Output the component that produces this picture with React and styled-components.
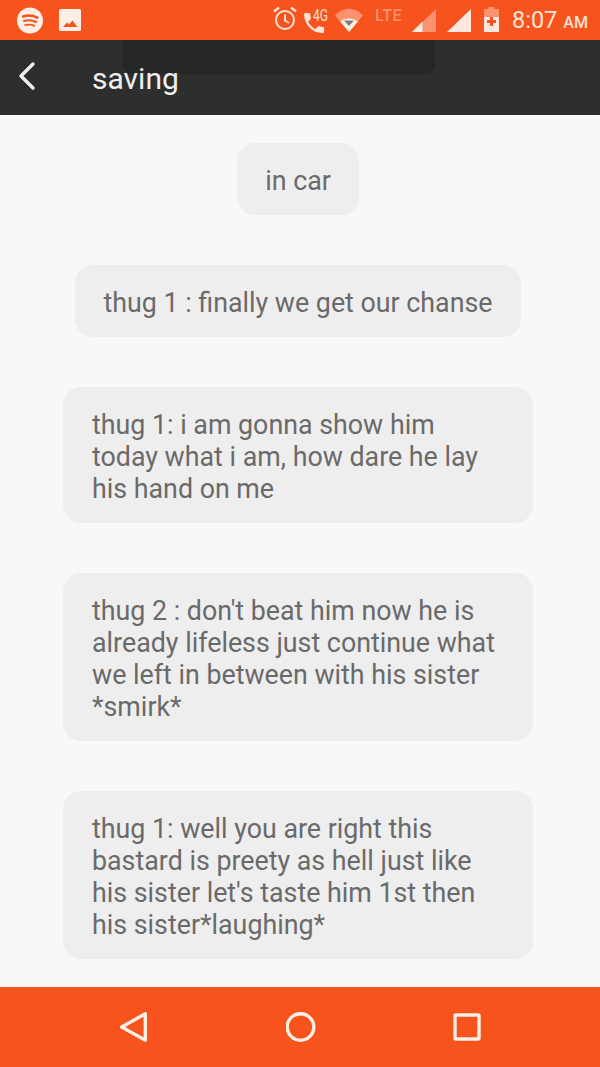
import styled, { createGlobalStyle } from "styled-components";

const GlobalStyle = createGlobalStyle`
  html, body {
    margin: 0;
    padding: 0;
    background: #f7f8fa;
  }
`;

const Screen = styled.div`
  position: relative;
  width: 600px;
  height: 1067px;
  display: flex;
  flex-direction: column;
  overflow: hidden;
  font-family: Roboto, "Noto Sans", sans-serif;
  background: #f7f8fa;
`;

const StatusBar = styled.div`
  height: 40px;
  flex: none;
  background: #f7541d;
  display: flex;
  align-items: center;
  padding: 0 13px 0 17px;
`;

const StatusLeft = styled.div`
  display: flex;
  align-items: center;
  gap: 16px;
  flex: 1;
`;

const StatusRight = styled.div`
  display: flex;
  align-items: center;
`;

const Clock = styled.div`
  width: 75px;
  margin-left: 13px;
  font-size: 23.5px;
  white-space: nowrap;
  color: #fde3d6;

  small {
    font-size: 16px;
    font-weight: 500;
    margin-left: 6px;
  }
`;

const Lte = styled.span`
  width: 28px;
  margin: -9px 9px 0 12px;
  font-size: 16px;
  font-weight: 500;
  letter-spacing: 0.5px;
  white-space: nowrap;
  color: #fb9270;
`;

const Gap = styled.span`
  flex: none;
  width: ${(p) => p.$w}px;
`;

const AppBar = styled.div`
  height: 75px;
  flex: none;
  background: #2d2e2e;
  display: flex;
  align-items: center;
  color: #f0f0f0;
`;

const BackButton = styled.div`
  width: 92px;
  padding-left: 17px;
  box-sizing: border-box;
  display: flex;
  margin-top: -4px;
`;

const Title = styled.div`
  position: relative;
  z-index: 1;
  font-size: 30px;
  margin-top: 2px;
`;

const Toast = styled.div`
  position: absolute;
  top: 40px;
  left: 123px;
  width: 312px;
  height: 34px;
  background: #252626;
  border-radius: 0 0 9px 9px;
`;

const Story = styled.div`
  flex: 1;
  overflow: hidden;
  display: flex;
  flex-direction: column;
  align-items: center;
  gap: 50px;
  padding: 28px 4px 0 0;
`;

const Bubble = styled.div`
  box-sizing: border-box;
  max-width: 470px;
  width: ${(p) => (p.$wide ? "470px" : "auto")};
  padding: 22px 28px 18px ${(p) => (p.$wide ? "29px" : "28px")};
  background: #eeeeee;
  border-radius: 18px;
  color: #6a6a6a;
  font-size: 26.8px;
  line-height: 32px;
`;

const NavBar = styled.div`
  height: 80px;
  flex: none;
  background: #f7541d;
  display: flex;
  align-items: center;
  justify-content: space-between;
  padding: 0 119px 0 118px;
`;

// status icons share one box: 32px tall, with viewBox y matching the screen y
const StatusIcon = ({ w, children }) => (
  <svg width={w} height="32" viewBox={`0 4 ${w} 32`}>
    {children}
  </svg>
);

const SpotifyIcon = () => (
  <StatusIcon w={26}>
    <circle cx="13" cy="20.5" r="13" fill="#fdeee6" />
    <g fill="none" stroke="#f7541d" strokeLinecap="round">
      <path d="M6 16.5 C10.5 15 16 15.3 20.5 17.6" strokeWidth="2.4" />
      <path d="M7 21 C11 19.9 15.5 20.2 19 22" strokeWidth="2" />
      <path d="M8 25 C11.5 24.2 14.8 24.4 17.6 25.9" strokeWidth="1.7" />
    </g>
  </StatusIcon>
);

const PictureIcon = () => (
  <StatusIcon w={22}>
    <rect y="9" width="22" height="22" rx="1.5" fill="#fdeee6" />
    <path d="M4 27 L8 22.5 L10.2 24.6 L13.4 20.5 L18.5 27 Z" fill="#f7541d" />
  </StatusIcon>
);

const AlarmIcon = () => (
  <StatusIcon w={26}>
    <g fill="none" stroke="#fde3d6" strokeWidth="2">
      <circle cx="13" cy="20" r="9" />
      <path d="M13 14.5 V20.5 L17 23" />
      <path d="M2 11.5 L7 7.5 M24 11.5 L19 7.5" strokeWidth="2.4" />
    </g>
  </StatusIcon>
);

const CallIcon = () => (
  <StatusIcon w={32}>
    <g transform="translate(-0.2 9.7) scale(1.11)" fill="#fde3d6">
      <path d="M6.62 10.79c1.44 2.83 3.76 5.14 6.59 6.59l2.2-2.2c.27-.27.67-.36 1.02-.24 1.12.37 2.33.57 3.57.57.55 0 1 .45 1 1V20c0 .55-.45 1-1 1-9.39 0-17-7.61-17-17 0-.55.45-1 1-1h3.5c.55 0 1 .45 1 1 0 1.25.2 2.45.57 3.57.11.35.03.74-.25 1.02l-2.2 2.2z" />
    </g>
    <text
      x="12"
      y="21"
      fontSize="16"
      fontFamily="Roboto, sans-serif"
      fill="#fde3d6"
      textLength="15"
      lengthAdjust="spacingAndGlyphs"
    >
      4G
    </text>
  </StatusIcon>
);

const WifiIcon = () => (
  <StatusIcon w={28}>
    <path d="M0 15.5 C8 6.5 20 6.5 28 15.5 L14 32 Z" fill="#fb9270" />
    <path d="M5.2 21.5 C10 17.5 18 17.5 22.8 21.5 L14 32 Z" fill="#fdeee6" />
    <path d="M9 20.4 H19 L14 26 Z" fill="#7d7f86" />
  </StatusIcon>
);

const SignalIcon = ({ weak }) => (
  <StatusIcon w={24}>
    <path d="M24 9 V32 H0 Z" fill={weak ? "#fb9270" : "#fde8df"} />
    {weak && <path d="M10.5 21.5 V32 H0 Z" fill="#fde8df" />}
  </StatusIcon>
);

const BatteryIcon = () => (
  <StatusIcon w={15}>
    <path d="M4.5 7 H10.5 V9 H15 V17 H0 V9 H4.5 Z" fill="#fb9270" />
    <path d="M0 17 H15 V32 H0 Z" fill="#fde8df" />
    <path d="M6 17 H9 V20 H12 V23 H9 V26 H6 V23 H3 V20 H6 Z" fill="#f7541d" />
  </StatusIcon>
);

const BackChevron = () => (
  <svg width="20" height="30" viewBox="0 0 20 30" fill="none" stroke="#f0f0f0" strokeWidth="3.4" strokeLinecap="round" strokeLinejoin="round">
    <path d="M16 3 L4 15 L16 27" />
  </svg>
);

const lines = [
  { text: "in car" },
  { text: "thug 1 : finally we get our chanse" },
  {
    wide: true,
    text: "thug 1: i am gonna show him today what i am, how dare he lay his hand on me",
  },
  {
    wide: true,
    text: "thug 2 : don't beat him now he is already lifeless just continue what we left in between with his sister *smirk*",
  },
  {
    wide: true,
    text: "thug 1: well you are right this bastard is preety as hell just like his sister let's taste him 1st then his sister*laughing*",
  },
];

export default function App() {
  return (
    <>
      <GlobalStyle />
      <Screen>
        <StatusBar>
          <StatusLeft>
            <SpotifyIcon />
            <PictureIcon />
          </StatusLeft>
          <StatusRight>
            <AlarmIcon />
            <Gap $w={3} />
            <CallIcon />
            <Gap $w={2} />
            <WifiIcon />
            <Lte>LTE</Lte>
            <SignalIcon weak />
            <Gap $w={11} />
            <SignalIcon />
            <Gap $w={13} />
            <BatteryIcon />
            <Clock>
              8:07<small>AM</small>
            </Clock>
          </StatusRight>
        </StatusBar>
        <AppBar>
          <BackButton>
            <BackChevron />
          </BackButton>
          <Title>saving</Title>
        </AppBar>
        <Toast />
        <Story>
          {lines.map((line) => (
            <Bubble key={line.text} $wide={line.wide}>
              {line.text}
            </Bubble>
          ))}
        </Story>
        <NavBar>
          <svg width="30" height="34" viewBox="0 0 30 34" fill="none" stroke="#fdeee6" strokeWidth="3.4" strokeLinejoin="round">
            <path d="M27.3 3.7 V30.3 L3.7 17 Z" />
          </svg>
          <svg width="30" height="30" viewBox="0 0 30 30" fill="none" stroke="#fdeee6" strokeWidth="3.4">
            <circle cx="14.5" cy="15" r="13.3" />
          </svg>
          <svg width="28" height="28" viewBox="0 0 28 28" fill="none" stroke="#fdeee6" strokeWidth="3.4" strokeLinejoin="round">
            <rect x="2" y="2" width="24" height="24" rx="1" />
          </svg>
        </NavBar>
      </Screen>
    </>
  );
}
